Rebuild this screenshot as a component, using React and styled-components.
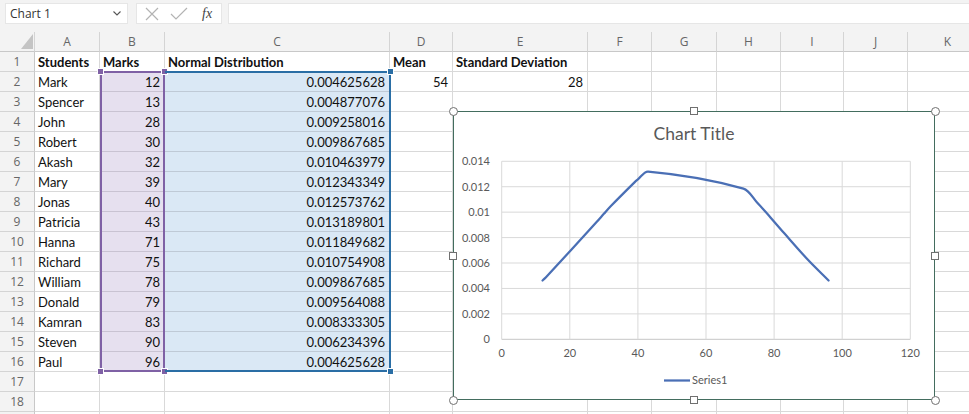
import React from 'react';
import styled, { createGlobalStyle } from 'styled-components';

const GlobalStyle = createGlobalStyle`
  html, body { margin: 0; padding: 0; background: #fff; overflow: hidden; }
  body { font-family: Lato, "Liberation Sans", sans-serif; }
`;

const Page = styled.div`
  width: 969px;
  height: 414px;
  overflow: hidden;
  display: flex;
  flex-direction: column;
  background: #fff;
`;

const FormulaBar = styled.div`
  flex: 0 0 32px;
  box-sizing: border-box;
  background: #f3f3f3;
  display: flex;
  align-items: flex-start;
  padding: 3px 0 0 5px;
`;

const NameBox = styled.div`
  width: 123px;
  height: 21px;
  box-sizing: border-box;
  background: #fff;
  border: 1px solid #e6e6e6;
  display: flex;
  align-items: center;
  justify-content: space-between;
  padding: 0 6px 0 4px;
  font-family: "Open Sans", "Liberation Sans", sans-serif;
  font-size: 12px;
  color: #333;
`;

const ActionBox = styled.div`
  margin-left: 8px;
  width: 86px;
  height: 21px;
  box-sizing: border-box;
  background: #fff;
  border: 1px solid #e6e6e6;
  display: flex;
  align-items: center;
  padding: 0 0 0 8px;
  gap: 11px;
`;

const Fx = styled.span`
  font-family: "Liberation Serif", serif;
  font-style: italic;
  font-size: 14px;
  color: #444;
  margin-left: 3px;
`;

const FormulaInput = styled.div`
  margin-left: 6px;
  flex: 1;
  height: 21px;
  box-sizing: border-box;
  background: #fff;
  border: 1px solid #e6e6e6;
  border-right: none;
`;

const Sheet = styled.div`
  position: relative;
  display: grid;
  grid-template-columns: 35px 65px 65px 225px 63px 135px 64px 65px 64px 63px 64px 80px;
  grid-auto-rows: 20px;
`;

const HeaderCell = styled.div`
  box-sizing: border-box;
  background: #f3f3f3;
  border-right: 1px solid #d4d4d4;
  border-bottom: 1px solid #c8c8c8;
  display: flex;
  align-items: center;
  justify-content: center;
  font-family: "Open Sans", "Liberation Sans", sans-serif;
  font-size: 12px;
  color: #666;
`;

const Corner = styled(HeaderCell)`
  justify-content: flex-end;
  align-items: flex-end;
  padding: 0 1px 2px 0;
`;

const RowHeader = styled(HeaderCell)`
  border-right: 1px solid #c8c8c8;
  border-bottom: 1px solid #d4d4d4;
`;

const fills = {
  purple: { bg: '#e6e0ef', line: '#c9c3d2' },
  blue: { bg: '#dae8f5', line: '#bfcad6' },
};

const Cell = styled.div`
  box-sizing: border-box;
  border-right: 1px solid ${(p) => (p.$fill ? fills[p.$fill].line : '#d9d9d9')};
  border-bottom: 1px solid ${(p) => (p.$fill ? fills[p.$fill].line : '#d9d9d9')};
  background: ${(p) => (p.$fill ? fills[p.$fill].bg : '#fff')};
  display: flex;
  align-items: center;
  justify-content: ${(p) => (p.$align === 'right' ? 'flex-end' : 'flex-start')};
  padding: 1px 4px 0 3px;
  font-size: 13px;
  font-weight: ${(p) => (p.$bold ? 700 : 400)};
  color: #111;
  white-space: nowrap;
  overflow: visible;
`;

const Selection = styled.div`
  position: absolute;
  pointer-events: none;
  z-index: 2;
  grid-column: ${(p) => p.$col} / span 1;
  grid-row: 3 / span 15;
  top: -1px;
  bottom: 0;
  left: 0;
  right: ${(p) => (p.$color === 'blue' ? '-1px' : '0')};
  border: 2px solid ${(p) => (p.$color === 'blue' ? '#2a6ea5' : '#7f61a5')};
  border-left-width: ${(p) => (p.$color === 'blue' ? '0' : '2px')};
`;

const SelHandle = styled.span`
  position: absolute;
  width: 5px;
  height: 5px;
  background: ${(p) => p.$color};
  border: 1px solid #fff;
  box-sizing: content-box;
  ${(p) => (p.$v === 'top' ? 'top: -5px;' : 'bottom: -5px;')}
  ${(p) => (p.$h === 'left' ? 'left: -5px;' : 'right: -5px;')}
`;

const ChartFrame = styled.div`
  position: absolute;
  z-index: 3;
  left: 453px;
  top: 79px;
  width: 482px;
  height: 289px;
  box-sizing: border-box;
  border: 1px solid #436d5e;
  background: #fff;
`;

const ChartSvg = styled.svg`
  display: block;
  font-family: Lato, "Liberation Sans", sans-serif;
`;

const FrameHandle = styled.span`
  position: absolute;
  box-sizing: border-box;
  width: ${(p) => (p.$round ? 9 : 8)}px;
  height: ${(p) => (p.$round ? 9 : 8)}px;
  border: 1px solid #707070;
  background: #fff;
  border-radius: ${(p) => (p.$round ? '50%' : '0')};
  ${(p) =>
    p.$h === 'left'
      ? `left: ${p.$round ? -5.5 : -5}px;`
      : p.$h === 'right'
      ? `right: ${p.$round ? -5.5 : -5}px;`
      : 'left: calc(50% - 4px);'}
  ${(p) =>
    p.$v === 'top'
      ? `top: ${p.$round ? -5.5 : -5}px;`
      : p.$v === 'bottom'
      ? `bottom: ${p.$round ? -5.5 : -5}px;`
      : 'top: calc(50% - 4px);'}
`;

const data = [
  ['Mark', 12, '0.004625628'],
  ['Spencer', 13, '0.004877076'],
  ['John', 28, '0.009258016'],
  ['Robert', 30, '0.009867685'],
  ['Akash', 32, '0.010463979'],
  ['Mary', 39, '0.012343349'],
  ['Jonas', 40, '0.012573762'],
  ['Patricia', 43, '0.013189801'],
  ['Hanna', 71, '0.011849682'],
  ['Richard', 75, '0.010754908'],
  ['William', 78, '0.009867685'],
  ['Donald', 79, '0.009564088'],
  ['Kamran', 83, '0.008333305'],
  ['Steven', 90, '0.006234396'],
  ['Paul', 96, '0.004625628'],
];

const letters = ['A', 'B', 'C', 'D', 'E', 'F', 'G', 'H', 'I', 'J', 'K'];

function rowCells(r) {
  const empty = Array(11).fill(null);
  if (r === 1) {
    return [
      { t: 'Students', bold: true },
      { t: 'Marks', bold: true },
      { t: 'Normal Distribution', bold: true },
      { t: 'Mean', bold: true },
      { t: 'Standard Deviation', bold: true },
      ...empty.slice(5),
    ];
  }
  if (r >= 2 && r <= 16) {
    const d = data[r - 2];
    const cells = [
      { t: d[0] },
      { t: String(d[1]), right: true, fill: 'purple' },
      { t: d[2], right: true, fill: 'blue' },
    ];
    if (r === 2) {
      cells.push({ t: '54', right: true }, { t: '28', right: true });
    } else {
      cells.push(null, null);
    }
    return [...cells, ...empty.slice(5)];
  }
  return empty;
}

const L = 47.7;
const B = 227.3;
const XS = 68.1 / 20;
const YS = 25.43 / 0.002;
const px = (x) => L + x * XS;
const py = (y) => B - y * YS;

function smoothPath(pts) {
  const n = pts.length;
  const tang = pts.map((p, i) => {
    const a = pts[Math.max(0, i - 1)];
    const b = pts[Math.min(n - 1, i + 1)];
    const dx = b[0] - a[0];
    const dy = b[1] - a[1];
    const len = Math.hypot(dx, dy) || 1;
    return [dx / len, dy / len];
  });
  let d = `M${pts[0][0].toFixed(2)},${pts[0][1].toFixed(2)}`;
  for (let i = 0; i < n - 1; i++) {
    const p1 = pts[i];
    const p2 = pts[i + 1];
    const seg = Math.hypot(p2[0] - p1[0], p2[1] - p1[1]);
    const h = seg / 3.2;
    const c1 = [p1[0] + tang[i][0] * h, p1[1] + tang[i][1] * h];
    const c2 = [p2[0] - tang[i + 1][0] * h, p2[1] - tang[i + 1][1] * h];
    d += ` C${c1[0].toFixed(2)},${c1[1].toFixed(2)} ${c2[0].toFixed(2)},${c2[1].toFixed(2)} ${p2[0].toFixed(2)},${p2[1].toFixed(2)}`;
  }
  return d;
}

function Chart() {
  const pts = data.map((d) => [px(d[1]), py(parseFloat(d[2]))]);
  const yTicks = [0, 0.002, 0.004, 0.006, 0.008, 0.01, 0.012, 0.014];
  const yLabels = ['0', '0.002', '0.004', '0.006', '0.008', '0.01', '0.012', '0.014'];
  const xTicks = [0, 20, 40, 60, 80, 100, 120];
  return (
    <ChartFrame>
      <ChartSvg width="480" height="287" viewBox="0 0 480 287">
        <text x="240" y="28" textAnchor="middle" fontSize="17.5" fill="#595959">
          Chart Title
        </text>
        {yTicks.map((t, i) => (
          <line
            key={'h' + i}
            x1={L}
            x2={px(120)}
            y1={py(t)}
            y2={py(t)}
            stroke={i === 0 ? '#c6c6c6' : '#d9d9d9'}
            strokeWidth="1"
          />
        ))}
        {xTicks.map((t, i) => (
          <line key={'v' + i} x1={px(t)} x2={px(t)} y1={py(0.014)} y2={B} stroke="#d9d9d9" strokeWidth="1" />
        ))}
        {yTicks.map((t, i) => (
          <text key={'yl' + i} x="36" y={py(t) + 4} textAnchor="end" fontSize="11" fill="#595959">
            {yLabels[i]}
          </text>
        ))}
        {xTicks.map((t, i) => (
          <text key={'xl' + i} x={px(t)} y="245" textAnchor="middle" fontSize="11" fill="#595959">
            {t}
          </text>
        ))}
        <path d={smoothPath(pts)} fill="none" stroke="#4a6fb5" strokeWidth="2.25" strokeLinecap="round" strokeLinejoin="round" />
        <line x1="210" x2="236" y1="268.5" y2="268.5" stroke="#4a6fb5" strokeWidth="2.25" />
        <text x="238" y="272" fontSize="11" fill="#595959">
          Series1
        </text>
      </ChartSvg>
      <FrameHandle $round $h="left" $v="top" />
      <FrameHandle $h="center" $v="top" />
      <FrameHandle $round $h="right" $v="top" />
      <FrameHandle $h="left" $v="middle" />
      <FrameHandle $h="right" $v="middle" />
      <FrameHandle $round $h="left" $v="bottom" />
      <FrameHandle $h="center" $v="bottom" />
      <FrameHandle $round $h="right" $v="bottom" />
    </ChartFrame>
  );
}

export default function App() {
  const rows = [];
  for (let r = 1; r <= 19; r++) rows.push(r);
  return (
    <Page>
      <GlobalStyle />
      <FormulaBar>
        <NameBox>
          <span>Chart 1</span>
          <svg width="8" height="5" viewBox="0 0 8 5">
            <polyline points="0.5,0.5 4,4 7.5,0.5" fill="none" stroke="#555" strokeWidth="1.1" />
          </svg>
        </NameBox>
        <ActionBox>
          <svg width="14" height="14" viewBox="0 0 14 14">
            <path d="M1 1 L13 13 M13 1 L1 13" stroke="#b3b3b3" strokeWidth="1.2" fill="none" />
          </svg>
          <svg width="18" height="13" viewBox="0 0 18 13">
            <polyline points="1,7 6,12 17,1" stroke="#b3b3b3" strokeWidth="1.2" fill="none" />
          </svg>
          <Fx>fx</Fx>
        </ActionBox>
        <FormulaInput />
      </FormulaBar>
      <Sheet>
        <Corner>
          <svg width="12" height="15" viewBox="0 0 12 15">
            <polygon points="12,0 12,15 0,15" fill="#c4c4c4" />
          </svg>
        </Corner>
        {letters.map((l) => (
          <HeaderCell key={l}>{l}</HeaderCell>
        ))}
        {rows.map((r) => (
          <React.Fragment key={r}>
            <RowHeader>{r <= 18 ? r : ''}</RowHeader>
            {rowCells(r).map((c, i) =>
              c ? (
                <Cell key={i} $align={c.right ? 'right' : 'left'} $bold={c.bold} $fill={c.fill}>
                  {c.t}
                </Cell>
              ) : (
                <Cell key={i} />
              )
            )}
          </React.Fragment>
        ))}
        <Selection $col={3} $color="purple">
          <SelHandle $color="#7f61a5" $h="left" $v="top" />
          <SelHandle $color="#7f61a5" $h="right" $v="top" />
          <SelHandle $color="#7f61a5" $h="left" $v="bottom" />
          <SelHandle $color="#7f61a5" $h="right" $v="bottom" />
        </Selection>
        <Selection $col={4} $color="blue">
          <SelHandle $color="#2a6ea5" $h="right" $v="top" />
          <SelHandle $color="#2a6ea5" $h="right" $v="bottom" />
        </Selection>
        <Chart />
      </Sheet>
    </Page>
  );
}
